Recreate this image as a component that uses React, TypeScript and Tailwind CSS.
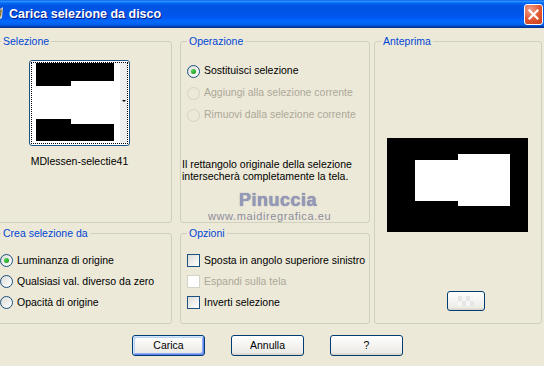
import React from "react";

function GroupBox({
  label,
  className = "",
  children,
}: {
  label: string;
  className?: string;
  children?: React.ReactNode;
}) {
  return (
    <fieldset className={`min-w-0 border border-[#d0d0bf] rounded-[3px] ${className}`}>
      <legend className="ml-[6px] px-[2px] leading-[12px] text-[#0046d5]">{label}</legend>
      {children}
    </fieldset>
  );
}

function Radio({ label, checked, disabled, h = "h-[21px]" }: { label: string; checked?: boolean; disabled?: boolean; h?: string }) {
  return (
    <div className={`flex items-center ${h}`}>
      <span
        className={`w-[13px] h-[13px] rounded-full border flex items-center justify-center ${
          disabled
            ? "border-[#d5d3c6] bg-[#ece9d8]"
            : "border-[#1c5180] bg-[linear-gradient(135deg,#dcdcd7,#ffffff)]"
        }`}
      >
        {checked && (
          <span className="w-[5px] h-[5px] rounded-full bg-[radial-gradient(circle_at_35%_35%,#55d55a,#21a121_70%)]" />
        )}
      </span>
      <span className={`ml-[4px] ${disabled ? "text-[#aca899]" : "text-black"}`}>{label}</span>
    </div>
  );
}

function Check({ label, disabled }: { label: string; disabled?: boolean }) {
  return (
    <div className="flex items-center h-[21px]">
      <span
        className={`w-[13px] h-[13px] border ${
          disabled ? "border-[#d5d3c6] bg-white" : "border-[#1c5180] bg-[linear-gradient(135deg,#dcdcd7,#ffffff)]"
        }`}
      />
      <span className={`ml-[4px] ${disabled ? "text-[#aca899]" : "text-black"}`}>{label}</span>
    </div>
  );
}

function XPButton({ children, def }: { children: React.ReactNode; def?: boolean }) {
  return (
    <button
      className={`w-[73px] h-[21px] rounded-[3px] border border-[#003c74] bg-[linear-gradient(180deg,#ffffff,#ecebe6_86%,#d6d0c5)] text-black leading-none ${
        def
          ? "shadow-[inset_1px_1px_0_#cee7ff,inset_-1px_-1px_0_#6982ee,inset_2px_2px_0_#bcd4f6,inset_-2px_-2px_0_#89adf4]"
          : ""
      }`}
    >
      {children}
    </button>
  );
}

export default function App() {
  return (
    <div className="relative w-[544px] h-[366px] overflow-hidden bg-[#ece9d8] font-['Liberation_Sans',Arial,sans-serif] text-[10.5px]">
      {/* title bar */}
      <div className="h-[28px] flex items-center bg-[linear-gradient(180deg,#0058ee_0%,#3593ff_4%,#288eff_6%,#127dff_8%,#036ffc_10%,#0262ee_14%,#0057e5_20%,#0054e3_24%,#0055eb_56%,#005bf5_66%,#026afe_76%,#0062ef_86%,#0052d6_92%,#0040ab_94%,#003092_100%)]">
        <svg width="3" height="28" viewBox="0 0 3 28">
          <polygon points="0,9 3,7 2,18 0,19" fill="#d8d4c0" />
          <polygon points="0,10 2,9 1,16 0,17" fill="#8f7a3a" />
        </svg>
        <span className="ml-[6px] text-white font-bold text-[12.5px] [text-shadow:1px_1px_0_#0a1883]">
          Carica selezione da disco
        </span>
        <div className="ml-auto mr-[1px] w-[19px] h-[21px] rounded-[3px] border border-white bg-[radial-gradient(circle_at_30%_25%,#f0a08a,#e2552f_55%,#c2401d)] flex items-center justify-center">
          <svg width="11" height="11" viewBox="0 0 11 11">
            <path d="M1.5 1.5 L9.5 9.5 M9.5 1.5 L1.5 9.5" stroke="#fff" strokeWidth="2.2" strokeLinecap="square" />
          </svg>
        </div>
      </div>

      <div className="flex pt-[7px] ml-[-6px]">
        <div className="grid grid-cols-[178px_190px] grid-rows-[188px_97px] gap-x-[8px] gap-y-[4px]">
          <GroupBox label="Selezione">
            <div className="pl-[34px] mt-[13px] w-[135px] flex flex-col items-center">
              <div className="w-[101px] h-[86px] rounded-[3px] border border-[#1c5180] bg-white p-[1px]">
                <div className="w-full h-full border border-dotted border-black">
                  <svg width="95" height="80" viewBox="0 0 95 80" className="block">
                    <rect x="0" y="0" width="95" height="80" fill="#fff" />
                    <rect x="88" y="0" width="7" height="80" fill="#eeeeee" />
                    <rect x="4" y="0" width="78" height="18" fill="#000" />
                    <rect x="4" y="18" width="35" height="5" fill="#000" />
                    <rect x="4" y="56" width="35" height="5" fill="#000" />
                    <rect x="4" y="61" width="78" height="17" fill="#000" />
                    <polygon points="90,37 94,37 92,39" fill="#000" />
                  </svg>
                </div>
              </div>
              <div className="mt-[9px] leading-[13px] text-black whitespace-nowrap">MDlessen-selectie41</div>
            </div>
          </GroupBox>

          <GroupBox label="Operazione">
            <div className="mt-[13px] pl-[6px]">
              <Radio label="Sostituisci selezione" checked h="h-[22px]" />
              <Radio label="Aggiungi alla selezione corrente" disabled h="h-[22px]" />
              <Radio label="Rimuovi dalla selezione corrente" disabled h="h-[22px]" />
            </div>
            <p className="mt-[32px] pl-[1px] leading-[12px] text-black">
              Il rettangolo originale della selezione
              <br />
              intersecherà completamente la tela.
            </p>
          </GroupBox>

          <GroupBox label="Crea selezione da">
            <div className="mt-[11px] pl-[5px]">
              <Radio label="Luminanza di origine" checked />
              <Radio label="Qualsiasi val. diverso da zero" />
              <Radio label="Opacità di origine" />
            </div>
          </GroupBox>

          <GroupBox label="Opzioni">
            <div className="mt-[11px] pl-[6px]">
              <Check label="Sposta in angolo superiore sinistro" />
              <Check label="Espandi sulla tela" disabled />
              <Check label="Inverti selezione" />
            </div>
          </GroupBox>
        </div>

        <GroupBox label="Anteprima" className="ml-[4px] w-[168px] h-[289px]">
          <div className="mt-[91px] pl-[12px]">
            <svg width="141" height="94" viewBox="0 0 141 94" className="block">
              <rect x="0" y="0" width="141" height="94" fill="#000" />
              <rect x="28" y="22" width="43" height="41" fill="#fff" />
              <rect x="71" y="16" width="52" height="52" fill="#fff" />
            </svg>
          </div>
          <div className="mt-[59px] pl-[72px]">
            <button className="w-[38px] h-[20px] rounded-[3px] border border-[#003c74] bg-[linear-gradient(180deg,#ffffff,#ecebe6_86%,#d6d0c5)] flex items-center justify-center">
              <svg width="16" height="10" viewBox="0 0 16 10">
                <rect x="0" y="0" width="16" height="10" fill="#f6f6f4" />
                <rect x="0" y="0" width="4" height="5" fill="#e6e6e6" />
                <rect x="8" y="0" width="4" height="5" fill="#e6e6e6" />
                <rect x="4" y="5" width="4" height="5" fill="#e6e6e6" />
                <rect x="12" y="5" width="4" height="5" fill="#e6e6e6" />
              </svg>
            </button>
          </div>
        </GroupBox>
      </div>

      <div className="flex gap-[26px] pl-[132px] mt-[11px]">
        <XPButton def>Carica</XPButton>
        <XPButton>Annulla</XPButton>
        <XPButton>?</XPButton>
      </div>

      {/* watermark */}
      <div className="absolute left-[208px] top-[190px] pointer-events-none">
        <div className="pl-[31px] text-[18px] font-semibold leading-[20px] text-[#9598b8] tracking-[0.5px] [text-shadow:0_0_1px_#6f7394]">
          Pinuccia
        </div>
        <div className="text-[11px] leading-[12px] text-[#8c8c9c] tracking-[0.6px]">www.maidiregrafica.eu</div>
      </div>
    </div>
  );
}
